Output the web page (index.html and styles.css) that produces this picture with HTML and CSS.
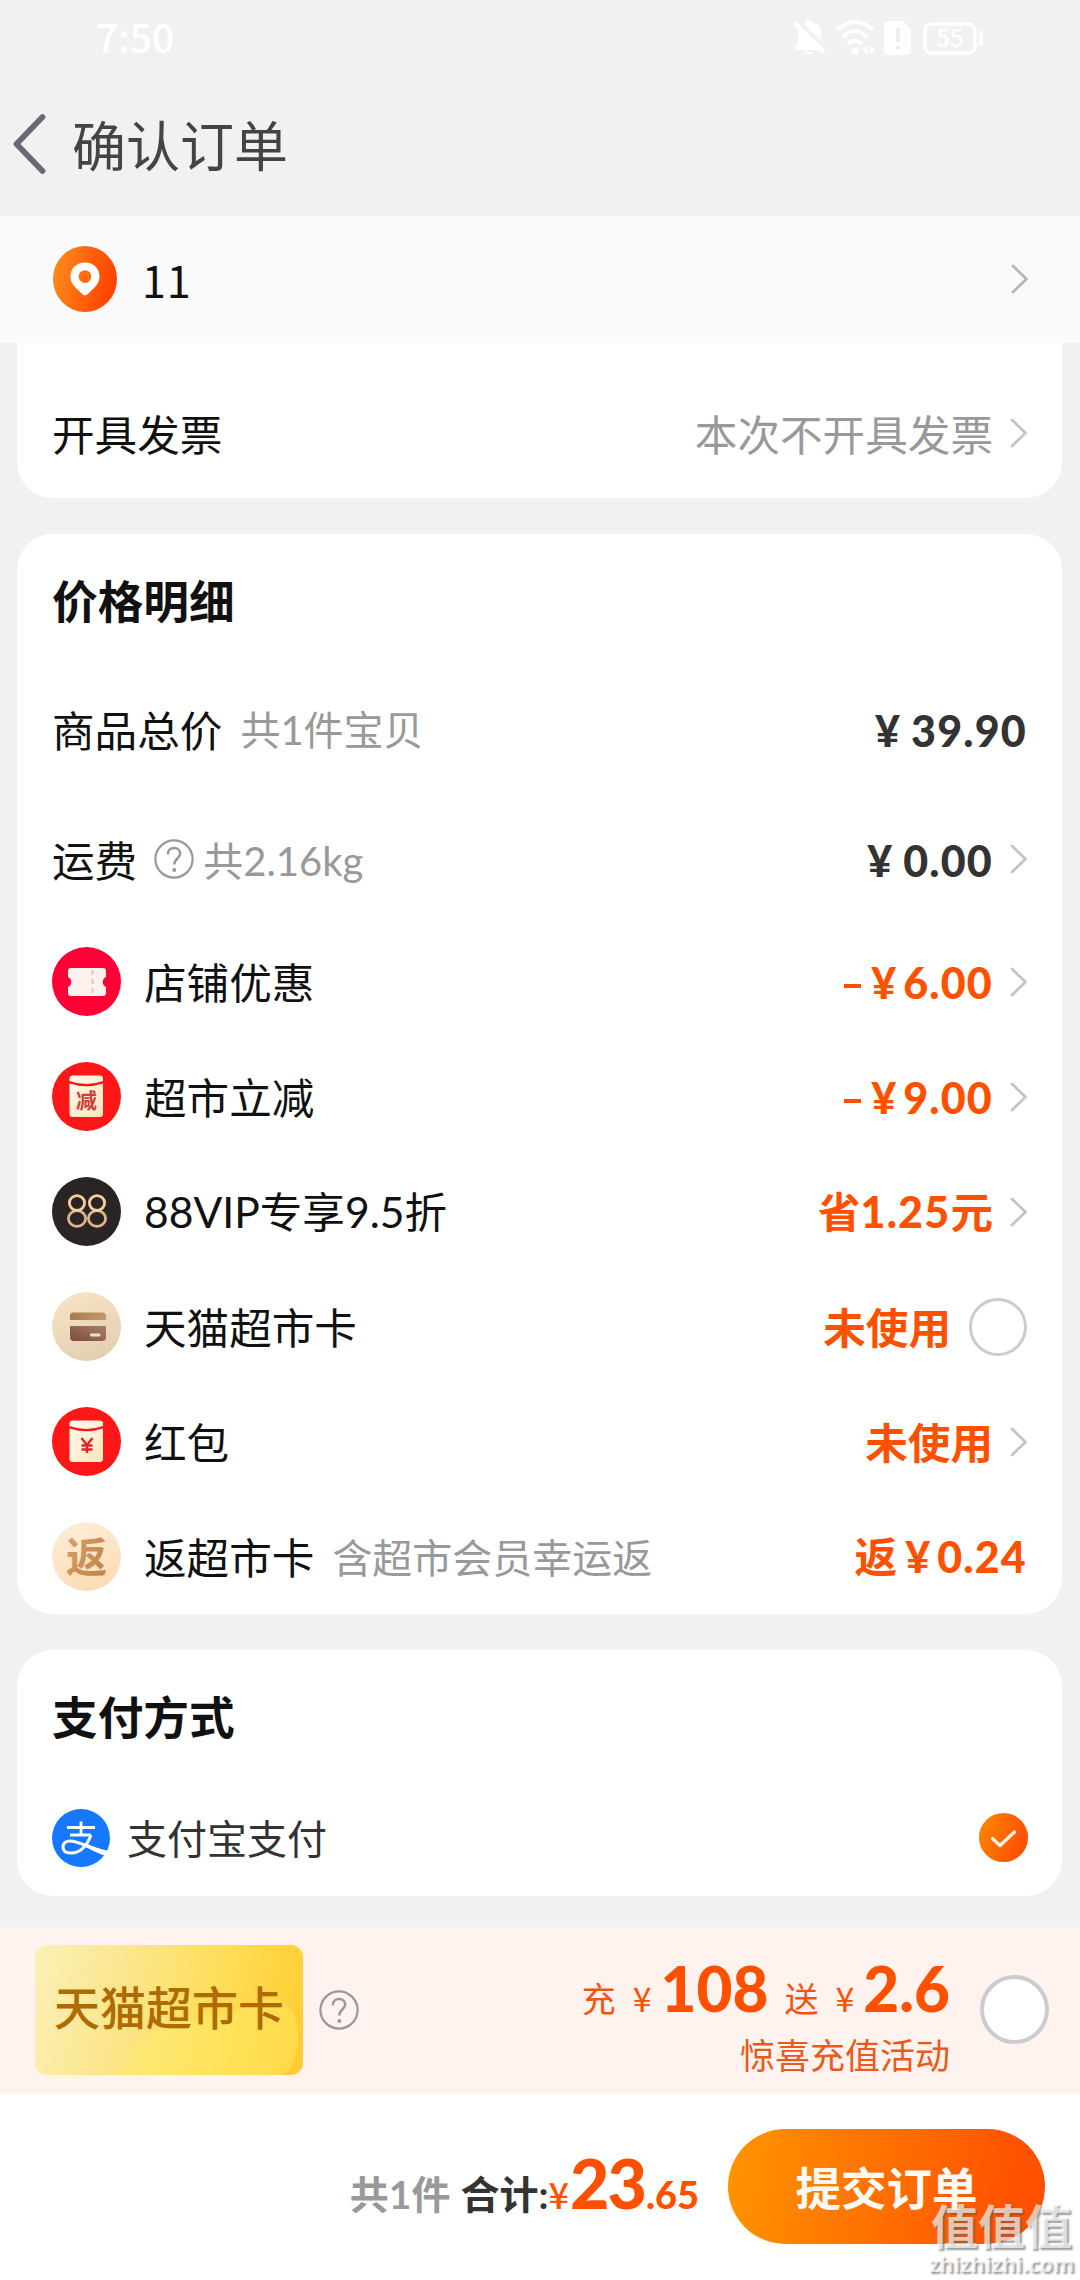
FILE: index.html
```html
<!DOCTYPE html>
<html lang="zh-CN">
<head>
<meta charset="utf-8">
<title>确认订单</title>
<link rel="stylesheet" href="styles.css">
</head>
<body>
<svg class="defs" width="0" height="0">
  <defs>
    <linearGradient id="orange" x1="0" y1="0" x2="1" y2="0.2"><stop offset="0" stop-color="#ff8f1f"/><stop offset="1" stop-color="#ff4400"/></linearGradient>
    <linearGradient id="tick" x1="0" y1="0" x2="1" y2="0.4"><stop offset="0" stop-color="#ff8a00"/><stop offset="1" stop-color="#ff5000"/></linearGradient>
    <linearGradient id="cream" x1="0" y1="0" x2="1" y2="1"><stop offset="0" stop-color="#fffaf0"/><stop offset="1" stop-color="#fbe6ba"/></linearGradient>
    <linearGradient id="beige" x1="0.2" y1="0" x2="0.6" y2="1"><stop offset="0" stop-color="#f8e3c4"/><stop offset="1" stop-color="#e3ceb2"/></linearGradient>
    <linearGradient id="peach" x1="0.2" y1="0" x2="0.6" y2="1"><stop offset="0" stop-color="#fdeeda"/><stop offset="1" stop-color="#fbdcb4"/></linearGradient>
    <linearGradient id="brownTop" x1="0" y1="0" x2="1" y2="0"><stop offset="0" stop-color="#a77c4c"/><stop offset="1" stop-color="#c39a68"/></linearGradient>
    <linearGradient id="brownLow" x1="0" y1="1" x2="1" y2="0"><stop offset="0" stop-color="#7d4a3c"/><stop offset="1" stop-color="#a67f6c"/></linearGradient>
    <linearGradient id="copper" x1="0" y1="0" x2="1" y2="1"><stop offset="0" stop-color="#d9a468"/><stop offset="1" stop-color="#bf7f48"/></linearGradient>
    <symbol id="chev" viewBox="0 0 18 30"><path d="M2 2 L15.5 15 L2 28" fill="none" stroke="#c4c4c4" stroke-width="2.8" stroke-linecap="round" stroke-linejoin="round"/></symbol>
    <symbol id="help" viewBox="0 0 40 40"><circle cx="20" cy="20" r="18.6" fill="none" stroke="#999" stroke-width="2.2"/><path d="M13.8 15.6 C13.8 11.4 16.4 9 20 9 C23.6 9 26.2 11.3 26.2 14.6 C26.2 19.4 20.3 19.2 20.3 25.6" fill="none" stroke="#999" stroke-width="2.5"/><circle cx="20.3" cy="31" r="2" fill="#999"/></symbol>
  </defs>
</svg>
<div class="screen">
  <header class="top">
    <div class="status">
      <span class="time">7:50</span>
      <svg class="signals" width="192" height="40" viewBox="0 0 192 40">
        <g fill="#fff">
          <path d="M4 9 L27 32 H2 V30 L5 26 V16 Q5 12 6.500 11 Z"/>
          <path d="M11 6 Q13 2 16 2 Q20 2 21 5 Q28 7 28 16 V23 Z"/>
          <path d="M11 34 H21 Q16 39 11 34 Z"/>
          <path d="M2 5 L31 34" stroke="#fff" stroke-width="4"/>
        </g>
        <g fill="none" stroke="#fff" stroke-width="4" stroke-linecap="round"><path d="M45 11 Q62 -3 79 11"/><path d="M51 18 Q62 8 73 18"/><path d="M56 25 Q62 20 68 25"/></g>
        <circle cx="62" cy="33" r="3.500" fill="#fff"/><path d="M70 32 L75 27 V37 Z M82 32 L77 27 V37 Z" fill="#fff"/>
        <path d="M96 3 H110 L118 11 V32 Q118 37 113 37 H96 Q91 37 91 32 V8 Q91 3 96 3 Z" fill="#fff"/>
        <path d="M105 10 V24 M105 28 V32" stroke="#eee" stroke-width="4"/>
        <rect x="132" y="6" width="50" height="29" rx="6" fill="none" stroke="#fff" stroke-width="3.500"/>
        <rect x="186" y="13" width="4" height="15" rx="2" fill="#fff"/>
        <text x="157" y="29" class="battery" text-anchor="middle">55</text>
      </svg>
    </div>
    <div class="nav">
      <svg class="back" width="34" height="62" viewBox="0 0 34 62"><path d="M29.500 4 L3.500 31 L29.500 58" fill="none" stroke="#666a73" stroke-width="5.800" stroke-linecap="round" stroke-linejoin="round"/></svg>
      <h1 class="page-title">确认订单</h1>
    </div>
  </header>

  <section class="address">
    <svg width="66" height="66" viewBox="0 0 66 68"><ellipse cx="33" cy="34" rx="33" ry="34" fill="url(#orange)"/><path d="M33 17 C24.500 17 18 23.300 18 31.500 C18 36 20 39.500 23 42.500 L29.500 49 C32 51.500 34 51.500 36.500 49 L43 42.500 C46 39.500 48 36 48 31.500 C48 23.300 41.500 17 33 17 Z" fill="#fff"/><circle cx="33" cy="31.500" r="6.500" fill="#ff6a15"/></svg>
    <span class="who">11</span>
    <svg class="chev" width="18" height="30"><use href="#chev"/></svg>
  </section>

  <section class="card invoice">
    <div class="row">
      <span class="label">开具发票</span>
      <span class="value muted">本次不开具发票</span>
      <svg class="chev" width="18" height="30"><use href="#chev"/></svg>
    </div>
  </section>

  <section class="card prices">
    <h2 class="card-title">价格明细</h2>
    <div class="row tall">
      <span class="label">商品总价</span><span class="note">共<span class="num">1</span>件宝贝</span>
      <span class="value money dark"><span class="yen">¥</span><span class="num wide">39.90</span></span>
    </div>
    <div class="row tall">
      <span class="label">运费</span><svg class="help" width="40" height="40"><use href="#help"/></svg><span class="weight">共<span class="num">2.16kg</span></span>
      <span class="value money dark"><span class="yen">¥</span><span class="num wide">0.00</span></span>
      <svg class="chev" width="18" height="30"><use href="#chev"/></svg>
    </div>
    <div class="row item">
      <svg class="ico" viewBox="0 0 69 69"><circle cx="34.500" cy="34.500" r="34.500" fill="#ff0036"/><path d="M19 21 H51 Q54 21 54 24 V30 A5.500 5.500 0 0 0 54 40 V46 Q54 49 51 49 H19 Q16 49 16 46 V40 A5.500 5.500 0 0 0 16 30 V24 Q16 21 19 21 Z" fill="#fff2ee"/><path d="M40.500 23 V48" stroke="#eec8c6" stroke-width="2.500" stroke-dasharray="5 4"/></svg>
      <span class="label">店铺优惠</span>
      <span class="value money hot"><span class="minus"></span><span class="yen">¥</span><span class="num wide">6.00</span></span>
      <svg class="chev" width="18" height="30"><use href="#chev"/></svg>
    </div>
    <div class="row item">
      <svg class="ico" viewBox="0 0 69 69"><circle cx="34.500" cy="34.500" r="34.500" fill="#ff1717"/><path d="M21 13.500 H48 Q51 13.500 51 16.500 V19 Q34.500 25 17.500 19 V16.500 Q17.500 13.500 21 13.500 Z M17.500 21.500 Q34.500 27 51 21.500 V52 Q51 55 48 55 H21 Q17.500 55 17.500 52 Z" fill="url(#cream)"/><text x="34.500" y="46" text-anchor="middle" class="glyph-cut">减</text></svg>
      <span class="label">超市立减</span>
      <span class="value money hot"><span class="minus"></span><span class="yen">¥</span><span class="num wide">9.00</span></span>
      <svg class="chev" width="18" height="30"><use href="#chev"/></svg>
    </div>
    <div class="row item">
      <svg class="ico" viewBox="0 0 69 69"><circle cx="34.500" cy="34.500" r="34.500" fill="#2b2424"/><g fill="none" stroke-width="2.800"><g stroke="#d9b68c"><ellipse cx="25" cy="41.500" rx="8.600" ry="7.800"/><ellipse cx="45" cy="41.500" rx="8.600" ry="7.800"/></g><g stroke="#f4d0a0"><ellipse cx="25" cy="26" rx="7.600" ry="7.400"/><ellipse cx="45" cy="26" rx="7.600" ry="7.400"/></g></g></svg>
      <span class="label"><span class="num">88VIP</span>专享<span class="num">9.5</span>折</span>
      <span class="value hot">省<span class="num wide">1.25</span>元</span>
      <svg class="chev" width="18" height="30"><use href="#chev"/></svg>
    </div>
    <div class="row item">
      <svg class="ico" viewBox="0 0 69 69"><circle cx="34.500" cy="34.500" r="34.500" fill="url(#beige)"/><path d="M18 28 V24 Q18 20.500 21.500 20.500 H50 Q54 20.500 54 24 V28 Z" fill="url(#brownTop)"/><path d="M18 34 H54 V45 Q54 49 50 49 H22 Q18 49 18 45 Z" fill="url(#brownLow)"/><rect x="38" y="41.500" width="10.500" height="3" rx="1" fill="#f3dfc5"/></svg>
      <span class="label">天猫超市卡</span>
      <span class="value hot">未使用</span>
      <span class="ring"></span>
    </div>
    <div class="row item">
      <svg class="ico" viewBox="0 0 69 69"><circle cx="34.500" cy="34.500" r="34.500" fill="#ff1717"/><path d="M21 13.500 H48 Q51 13.500 51 16.500 V19 Q34.500 25 17.500 19 V16.500 Q17.500 13.500 21 13.500 Z M17.500 21.500 Q34.500 27 51 21.500 V52 Q51 55 48 55 H21 Q17.500 55 17.500 52 Z" fill="url(#cream)"/><path d="M29.500 31 L35 38 L40.500 31 M35 37.500 V46 M29.500 38.500 H40.500 M29.500 42.500 H40.500" fill="none" stroke="#e0242c" stroke-width="2.400"/></svg>
      <span class="label">红包</span>
      <span class="value hot">未使用</span>
      <svg class="chev" width="18" height="30"><use href="#chev"/></svg>
    </div>
    <div class="row item">
      <svg class="ico" viewBox="0 0 69 69"><circle cx="34.500" cy="34.500" r="34.500" fill="url(#peach)"/><text x="34.500" y="49.500" text-anchor="middle" class="glyph-back">返</text></svg>
      <span class="label">返超市卡</span><span class="note lucky">含超市会员幸运返</span>
      <span class="value hot">返<span class="yen gap">¥</span><span class="num wide">0.24</span></span>
    </div>
  </section>

  <section class="card pay">
    <h2 class="card-title">支付方式</h2>
    <div class="row">
      <svg width="58" height="58" viewBox="0 0 58 58"><circle cx="29" cy="29" r="29" fill="#1677ff"/><g fill="none" stroke="#fff"><path d="M15 18.500 H43 M29 12.500 V26 M18 26 H39" stroke-width="2.800"/><path d="M39 26 C36 34 30 44 19 44 C14 44 11 42 11 38 C11 34 14 32 18 32 C26 32 36 38 56 45" stroke-width="3"/></g><path d="M33 34 C42 38 50 40.500 57.200 42 L54 47 C46 44.500 39 40.500 31.500 37 Z" fill="#fff"/></svg>
      <span class="pay-name">支付宝支付</span>
      <svg class="check" width="49" height="49" viewBox="0 0 49 49"><circle cx="24.500" cy="24.500" r="24.500" fill="url(#tick)"/><path d="M13.500 25.500 L21 32.500 L35.500 19" fill="none" stroke="#fff3e3" stroke-width="3.200" stroke-linecap="round" stroke-linejoin="round"/></svg>
    </div>
  </section>

  <section class="recharge">
    <div class="market-card">
      <svg class="shine" viewBox="0 0 268 130"><path d="M90 130 C90 100 120 78 160 75 C210 71 215 54 240 54 C256 56 263 72 263 92 C263 112 255 130 240 130 Z" fill="#ffee6d" opacity=".4"/></svg>
      <span class="market-name">天猫超市卡</span>
    </div>
    <svg class="help near" width="40" height="40"><use href="#help"/></svg>
    <div class="offer">
      <div class="offer-main"><span class="word">充</span><span class="small-yen">¥</span><span class="big">108</span><span class="word give">送</span><span class="small-yen">¥</span><span class="big">2.6</span></div>
      <div class="offer-sub">惊喜充值活动</div>
    </div>
    <span class="ring large"></span>
  </section>

  <footer class="submit-bar">
    <div class="total"><span class="count">共<span class="num">1</span>件</span><span class="sum">合计<span class="num">:</span></span><span class="sum-yen">¥</span><span class="sum-int">23</span><span class="sum-dec">.65</span></div>
    <button class="submit" type="button">提交订单</button>
  </footer>

  <div class="watermark"><span class="wm-name">值值值</span><span class="wm-url">zhizhizhi.com</span></div>
</div>
</body>
</html>
```
FILE: styles.css
```css
* { box-sizing: border-box; }
body {
  margin: 0;
  background: #f1f1f1;
  font-family: "Noto Sans CJK SC", sans-serif;
  color: #111;
}
.defs { display: block; position: absolute; }
.screen {
  position: relative;
  width: 1080px;
  height: 2280px;
  overflow: hidden;
  display: flex;
  flex-direction: column;
}
h1, h2 { margin: 0; }
svg { flex: none; display: block; }
span { white-space: nowrap; }
.num { font-family: Lato, sans-serif; }

.top { height: 216px; }
.status {
  height: 76px;
  padding: 0 95px 0 96px;
  display: flex;
  align-items: center;
  justify-content: space-between;
}
.time { color: #fff; font: 500 39px/60px "Noto Sans CJK SC", sans-serif; padding-bottom: 5px; }
.battery { font: 500 24px "Noto Sans CJK SC", sans-serif; fill: #fff; }
.nav { height: 136px; padding-left: 13px; display: flex; align-items: center; gap: 25px; }
.page-title { font-size: 54px; line-height: 80px; font-weight: 400; color: #444; }

.address {
  height: 127px;
  padding: 0 52px 2px;
  background: #fafafa;
  display: flex;
  align-items: center;
}
.who { margin-left: 24px; font: 43px/60px "Noto Sans CJK SC", sans-serif; letter-spacing: 1px; }
.address .chev { filter: brightness(.93); }
.chev { margin-left: 17px; margin-right: -1px; }
.address .chev, .check { margin-left: auto; margin-right: -1px; }

.card { margin: 0 18px 36px 17px; padding: 0 35px; background: #fff; border-radius: 36px; }
.invoice { height: 155px; padding-top: 26px; border-radius: 0 0 36px 36px; }
.card-title { font-size: 45.7px; line-height: 130px; height: 130px; font-weight: 700; }
.row { display: flex; align-items: center; height: 128px; }
.row.tall { height: 130px; }
.row.item { height: 115px; }
.label { font-size: 42.600px; line-height: 64px; }
.item .label { padding-bottom: 2px; }
.note, .weight { font-size: 40px; line-height: 64px; color: #999; }
.note { margin-left: 18px; }
.lucky { padding-bottom: 2px; }
.help { margin-left: 17px; }
.weight { margin-left: 9px; padding-top: 2px; }
.ico { width: 69px; height: 69px; margin-right: 23px; }
.value { margin-left: auto; display: flex; align-items: baseline; font-size: 42.600px; line-height: 64px; font-weight: 700; }
.item .value { padding-bottom: 2px; }
.row .money { padding: 4px 0 0; }
.item .money { padding-top: 3px; }
.muted { color: #999; font-weight: 400; }
.dark { color: #333; }
.hot { color: #ff5000; }
.yen { font: 900 43px/64px Lato, sans-serif; margin-right: 7px; }
.dark .yen { margin-right: 11px; }
.gap { margin-left: 8px; }
.wide { font-size: 43px; font-weight: 900; letter-spacing: 1.200px; }
.minus { width: 17px; height: 4.500px; background: currentColor; margin-right: 10px; position: relative; top: -11px; }
.ring { width: 58px; height: 58px; border: 3px solid #ccc; border-radius: 50%; background: #fff; margin-left: 18px; flex: none; }
.glyph-cut { font: 700 21px "Noto Sans CJK SC", sans-serif; fill: #d43c36; }
.glyph-back { font: 700 41px "Noto Sans CJK SC", sans-serif; fill: url(#copper); }

.pay { height: 246px; margin-bottom: 31px; }
.pay .row { height: 116px; padding-bottom: 1px; }
.pay-name { margin-left: 17px; padding-bottom: 2px; font-size: 40px; line-height: 60px; color: #333; }

.recharge {
  height: 167px;
  padding: 0 31px 2px 35px;
  background: #fff3ef;
  display: flex;
  align-items: center;
}
.market-card {
  position: relative;
  width: 268px;
  height: 130px;
  border-radius: 12px;
  background: linear-gradient(105deg, #fbf0b8 0%, #fbe58a 35%, #ffdd57 65%, #ffcb2c 100%);
  display: flex;
  align-items: center;
  justify-content: center;
  overflow: hidden;
}
.shine { position: absolute; inset: 0; }
.market-name { position: relative; padding-bottom: 10px; font-size: 46px; line-height: 60px; color: #b06b00; font-weight: 500; }
.near { margin-left: 16px; }
.offer { margin-left: auto; padding-top: 11px; display: flex; flex-direction: column; align-items: flex-end; color: #ff5000; }
.offer-main { display: flex; align-items: baseline; height: 78px; line-height: 72px; }
.word { font-size: 34px; line-height: 60px; color: #f2540f; }
.give { margin-left: 16px; }
.small-yen { font: 34px/60px "Noto Sans CJK SC", sans-serif; margin: 0 9px 0 17px; }
.big { font: 900 62px/72px Lato, sans-serif; }
.offer-sub { font-size: 35px; line-height: 48px; color: #ea5a1b; }
.large { width: 69px; height: 69px; border-width: 4px; margin-left: 30px; }

.submit-bar {
  height: 186px;
  padding: 0 35px 2px 0;
  background: #fff;
  display: flex;
  align-items: center;
  justify-content: flex-end;
}
.total { display: flex; align-items: baseline; padding-top: 4px; font-weight: 700; font-size: 39px; line-height: 80px; color: #ff5000; }
.count { color: #999; margin-right: 10px; }
.sum { color: #333; }
.sum-yen { font: 500 36px/80px "Noto Sans CJK SC", sans-serif; margin-right: 1px; }
.sum-int { font: 900 68px/80px Lato, sans-serif; letter-spacing: -2px; }
.sum-dec { font: 900 38px/80px Lato, sans-serif; margin-left: 1px; }
.submit {
  width: 317px;
  height: 115px;
  margin-left: 29px;
  border: 0;
  border-radius: 58px;
  background: linear-gradient(100deg, #ff9500 0%, #ff5000 90%);
  color: #fffaf4;
  font: 700 45.500px/60px "Noto Sans CJK SC", sans-serif;
}
.watermark {
  position: absolute;
  right: 6px;
  bottom: 3px;
  display: flex;
  flex-direction: column;
  align-items: center;
  color: rgba(255, 255, 255, .68);
  text-shadow: 2px 2px 2px rgba(90, 90, 90, .6);
}
.wm-name { font-size: 47px; line-height: 52px; font-weight: 700; }
.wm-url { font: 700 21.500px/27px "Open Sans", sans-serif; }
```
